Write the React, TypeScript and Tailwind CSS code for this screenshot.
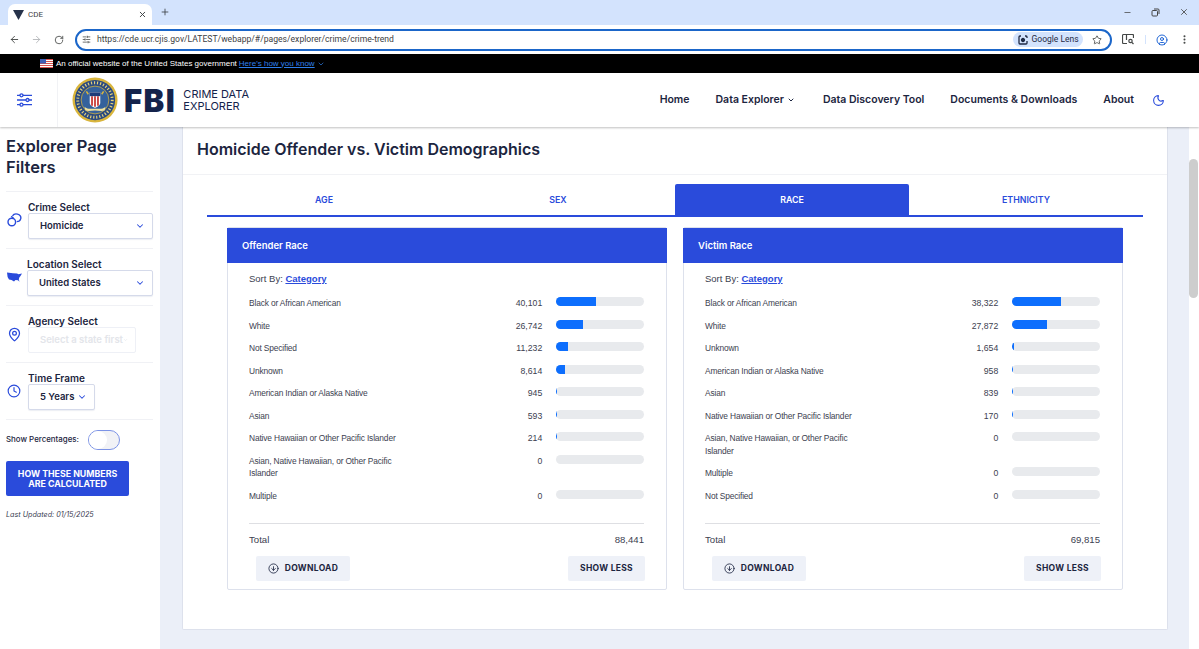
import {
  ArrowDownCircle,
  ArrowLeft,
  ArrowRight,
  ChevronDown,
  CircleUser,
  Clock,
  EllipsisVertical,
  MapPin,
  Minus,
  Moon,
  Plus,
  RotateCw,
  SlidersHorizontal,
  Star,
  X,
} from "lucide-react";

interface Row {
  label: string;
  value: string;
  pct: number;
}

const offender: Row[] = [
  { label: "Black or African American", value: "40,101", pct: 45 },
  { label: "White", value: "26,742", pct: 30.5 },
  { label: "Not Specified", value: "11,232", pct: 13 },
  { label: "Unknown", value: "8,614", pct: 10 },
  { label: "American Indian or Alaska Native", value: "945", pct: 1.1 },
  { label: "Asian", value: "593", pct: 0.7 },
  { label: "Native Hawaiian or Other Pacific Islander", value: "214", pct: 0.4 },
  { label: "Asian, Native Hawaiian, or Other Pacific Islander", value: "0", pct: 0 },
  { label: "Multiple", value: "0", pct: 0 },
];

const victim: Row[] = [
  { label: "Black or African American", value: "38,322", pct: 55 },
  { label: "White", value: "27,872", pct: 40 },
  { label: "Unknown", value: "1,654", pct: 2.4 },
  { label: "American Indian or Alaska Native", value: "958", pct: 1.4 },
  { label: "Asian", value: "839", pct: 1.2 },
  { label: "Native Hawaiian or Other Pacific Islander", value: "170", pct: 0.3 },
  { label: "Asian, Native Hawaiian, or Other Pacific Islander", value: "0", pct: 0 },
  { label: "Multiple", value: "0", pct: 0 },
  { label: "Not Specified", value: "0", pct: 0 },
];

function Seal() {
  return (
    <svg width="46" height="46" viewBox="0 0 48 48">
      <circle cx="24" cy="24" r="23.5" fill="#d9b53c" />
      <circle cx="24" cy="24" r="21" fill="#2a4a80" />
      <circle cx="24" cy="24" r="18" fill="none" stroke="#e6d27a" strokeWidth="3" strokeDasharray="1.2 2" />
      <circle cx="24" cy="24" r="14.5" fill="#34619c" stroke="#d9b53c" strokeWidth="0.8" />
      <path d="M18.5 16h11v11c0 2.5-3 4-5.5 5-2.5-1-5.5-2.500-5.5-5z" fill="#fff" />
      <path d="M20 20h1.800v10h-1.800zM23.100 20h1.800v11h-1.800zM26.200 20h1.800v10h-1.800z" fill="#c8342f" />
      <path d="M18.500 16h11v4h-11z" fill="#1f3c78" />
      <path d="M13 31c3 3 7 2 11 2s8 1 11-2l-1 4c-3 1-7 0-10 0s-7 1-10 0z" fill="#f1e3a0" />
      <path d="M15 15l2 3M33 15l-2 3" stroke="#d9b53c" strokeWidth="1.6" />
    </svg>
  );
}

function Handcuffs() {
  return (
    <svg width="15" height="14" viewBox="0 0 15 14" fill="none" stroke="#2a4bdb" strokeWidth="1.4">
      <circle cx="4.800" cy="9" r="3.800" />
      <path d="M5.500 2.800c1-1.500 3-2.200 5-1.700 2.500.6 3.800 2.800 3.200 4.800-.5 1.700-2 2.700-3.900 2.700" />
      <path d="M4.200 3.200l2.300 2" />
    </svg>
  );
}

function UsMap() {
  return (
    <svg width="15" height="10" viewBox="0 0 15 10" fill="#2a4bdb">
      <path d="M0 .5L6 1.200L10 1.600L11.500 2.200L15 1.500L13.500 4L12.300 5.500L11.800 7.500L12.500 9.800L11 8.300L8.500 8L7 9.500L4.500 8L2 7.500L.6 5z" />
    </svg>
  );
}

function FilterToggleIcon() {
  return (
    <svg width="15" height="14" viewBox="0 0 15 14" fill="none" stroke="#2a4bdb" strokeWidth="1.300">
      <path d="M0 2.300h3M6 2.300h9M0 7h9M12 7h3M0 11.700h3M6 11.700h9" />
      <circle cx="4.500" cy="2.300" r="1.500" />
      <circle cx="10.500" cy="7" r="1.500" />
      <circle cx="4.500" cy="11.700" r="1.500" />
    </svg>
  );
}

function Select({
  value,
  width,
  disabled,
}: {
  value: string;
  width: string;
  disabled?: boolean;
}) {
  return (
    <div
      className={
        "flex h-[26px] items-center justify-between rounded-[2px] border bg-white pr-[7px] pl-[11px] text-[9.500px] font-semibold " +
        width +
        (disabled ? " border-[#eef0f6] font-normal text-[#e3e5ea]" : " border-[#d5daea] text-[#1c2540] shadow-[0_1px_1px_rgba(30,50,120,0.08)]")
      }
    >
      <span className="whitespace-nowrap">{value}</span>
      <ChevronDown size={10} strokeWidth={2.5} className={disabled ? "text-[#e3e5ea]" : "text-[#2a4bdb]"} />
    </div>
  );
}

function Filter({
  icon,
  label,
  iconWidth = "w-[22px]",
  children,
}: {
  icon: React.ReactNode;
  label: string;
  iconWidth?: string;
  children: React.ReactNode;
}) {
  return (
    <div className="flex h-[57px] items-center border-t border-[#f0f1f5]">
      <div className={"flex shrink-0 justify-start pl-px " + iconWidth}>{icon}</div>
      <div>
        <div className="text-[10px] leading-[12px] font-semibold text-[#1c2540]">{label}</div>
        {children}
      </div>
    </div>
  );
}

function Sidebar() {
  return (
    <aside className="h-full w-[160px] shrink-0 bg-white pt-[9px] pl-[6px]">
      <h2 className="text-[16.500px] leading-[21px] font-semibold text-[#1c2540]">
        Explorer Page
        <br />
        Filters
      </h2>
      <div className="mt-[13px] w-[147px]">
        <Filter icon={<Handcuffs />} label="Crime Select">
          <Select value="Homicide" width="w-[125px]" />
        </Filter>
        <Filter icon={<UsMap />} iconWidth="w-[21px]" label="Location Select">
          <Select value="United States" width="w-[126px]" />
        </Filter>
        <Filter icon={<MapPin size={15} strokeWidth={2} className="text-[#2a4bdb]" />} label="Agency Select">
          <Select value="Select a state first" width="w-[108px]" disabled />
        </Filter>
        <Filter icon={<Clock size={14} strokeWidth={2} className="text-[#2a4bdb]" />} label="Time Frame">
          <Select value="5 Years" width="w-[67px]" />
        </Filter>
        <div className="flex h-[41px] items-center gap-[9px] border-t border-[#f0f1f5]">
          <span className="text-[7.900px] font-medium text-[#1c2540]">Show Percentages:</span>
          <div className="flex h-[20px] w-[32px] rounded-full border border-[#7c93e6] bg-[#f1f2f6]">
            <div className="h-full w-[18px] rounded-full bg-white" />
          </div>
        </div>
      </div>
      <button
        type="button"
        className="mt-[1px] h-[35px] w-[123px] rounded-[2px] bg-[#2a4bdb] text-[8.800px] leading-[10px] font-bold text-white"
      >
        HOW THESE NUMBERS
        <br />
        ARE CALCULATED
      </button>
      <p className="mt-[14px] text-[7.200px] text-[#3a4052] italic">Last Updated: 01/15/2025</p>
    </aside>
  );
}

function Panel({ title, rows, total }: { title: string; rows: Row[]; total: string }) {
  return (
    <section className="h-[363px] w-[440px] rounded-[2px] border border-[#dde1ec] bg-white font-['Liberation_Sans',sans-serif]">
      <div className="-mx-px flex h-[35px] items-center bg-[#2a4bdb] pt-[1px] pl-[15px] font-['Inter',sans-serif] text-[9.500px] font-semibold text-white">
        {title}
      </div>
      <div className="pt-[9px] pr-[22px] pl-[21px]">
        <div className="h-[14px] text-[9.500px] leading-[14px] text-[#3c4150]">
          Sort By:{" "}
          <a href="#" className="font-bold text-[#2a4bdb] underline">
            Category
          </a>
        </div>
        <div className="mt-[11px] flex flex-col gap-[10px]">
          {rows.map((r) => (
            <div key={r.label} className="flex items-start text-[8.400px] leading-[12.500px] text-[#3c4150]">
              <div className="w-[161px] tracking-[-0.15px]">{r.label}</div>
              <div className="w-[133px] text-right text-[8.700px]">{r.value}</div>
              <div className="ml-[14px] h-[9px] w-[88px] overflow-hidden rounded-full bg-[#e8eaed]">
                <div className="h-full bg-[#0d6efd]" style={{ width: `${r.pct}%` }} />
              </div>
            </div>
          ))}
        </div>
        <div className="mt-[21px] border-t border-[#dedfe3] pt-[10px]">
          <div className="flex justify-between text-[9.600px] leading-[12px] text-[#3c4150]">
            <span>Total</span>
            <span>{total}</span>
          </div>
          <div className="-mr-px mt-[10px] flex justify-between pl-[7px] font-['Inter',sans-serif] text-[8.500px] font-bold tracking-[0.3px] text-[#1c2540]">
            <button type="button" className="flex h-[25px] w-[94px] items-center justify-center gap-[6px] rounded-[2px] bg-[#eef1f8]">
              <ArrowDownCircle size={11} strokeWidth={1.800} />
              DOWNLOAD
            </button>
            <button type="button" className="h-[25px] w-[77px] rounded-[2px] bg-[#eef1f8]">
              SHOW LESS
            </button>
          </div>
        </div>
      </div>
    </section>
  );
}

function Tabs() {
  const tabs = ["AGE", "SEX", "RACE", "ETHNICITY"];
  return (
    <div className="mx-[24px] mt-[9px] flex h-[33px] border-b-2 border-[#2a4bdb]">
      {tabs.map((t) => (
        <div
          key={t}
          className={
            "flex flex-1 items-center justify-center rounded-t-[2px] text-[8.800px] font-semibold " +
            (t === "RACE" ? "bg-[#2a4bdb] text-white" : "text-[#2a4bdb]")
          }
        >
          {t}
        </div>
      ))}
    </div>
  );
}

function BrowserBar() {
  return (
    <div className="font-['Roboto',sans-serif]">
      <div className="flex h-[25px] items-end bg-[#d3e3fd] pl-[8px]">
        <div className="flex h-[21px] w-[144px] items-center rounded-t-[7px] bg-white pr-[5px] pl-[5px]">
          <svg width="11" height="10" viewBox="0 0 11 10" fill="#26324a">
            <path d="M0 0h11L5.500 10z" />
          </svg>
          <span className="ml-[4px] flex-1 text-[8px] text-[#3c4043]">CDE</span>
          <X size={9} strokeWidth={2.500} className="text-[#3c4043]" />
        </div>
        <Plus size={10} strokeWidth={2} className="mb-[8px] ml-[8px] text-[#3c4043]" />
        <div className="mb-[8px] ml-auto flex items-center gap-[19px] pr-[10px] text-[#444]">
          <Minus size={9} />
          <svg width="9" height="9" viewBox="0 0 9 9" fill="none" stroke="#444" strokeWidth="1">
            <rect x="1" y="2.500" width="5.500" height="5.500" rx="1" />
            <path d="M3 1h4a1 1 0 0 1 1 1v4" />
          </svg>
          <X size={10} />
        </div>
      </div>
      <div className="flex h-[29px] items-center bg-white pr-[9px] pl-[9px] text-[#444746]">
        <ArrowLeft size={11} strokeWidth={2} />
        <ArrowRight size={11} strokeWidth={2} className="ml-[11px] text-[#b5b7ba]" />
        <RotateCw size={10} strokeWidth={2} className="ml-[12px]" />
        <div className="ml-[11px] flex h-[22px] w-[1039px] items-center rounded-full border-2 border-[#1b66c9] pr-[8px] pl-[5px]">
          <SlidersHorizontal size={9} strokeWidth={2} />
          <span className="ml-[6px] flex-1 text-[8.600px] text-[#3c4043]">
            https://cde.ucr.cjis.gov/LATEST/webapp/#/pages/explorer/crime/crime-trend
          </span>
          <div className="flex h-[15px] w-[70px] items-center justify-center gap-[4px] rounded-full bg-[#d3e3fd] text-[8.500px] text-[#1f2a44]">
            <svg width="10" height="10" viewBox="0 0 10 10" fill="none" stroke="#1f2a44" strokeWidth="1.300">
              <path d="M3 1H2a1 1 0 0 0-1 1v6a1 1 0 0 0 1 1h6a1 1 0 0 0 1-1V6M7 1h1a1 1 0 0 1 1 1v1" />
              <circle cx="5" cy="5" r="1.500" fill="#1f2a44" />
            </svg>
            Google Lens
          </div>
          <Star size={10} strokeWidth={2} className="ml-[9px]" />
        </div>
        <svg width="12" height="11" viewBox="0 0 12 11" fill="none" stroke="#444746" strokeWidth="1.200" className="ml-[10px]">
          <path d="M5 9.500H1.500a1 1 0 0 1-1-1v-7a1 1 0 0 1 1-1h9a1 1 0 0 1 1 1V4M4.500.5V6" />
          <circle cx="8.500" cy="7" r="1.700" />
          <path d="M10 8.500l1.500 1.500" />
        </svg>
        <div className="ml-[11px] h-[9px] w-px bg-[#d3e3fd]" />
        <CircleUser size={12} strokeWidth={1.800} className="ml-[10px] text-[#0b57d0]" />
        <EllipsisVertical size={11} strokeWidth={2.500} className="ml-[11px]" />
      </div>
    </div>
  );
}

function GovBanner() {
  return (
    <div className="flex h-[19px] items-center bg-black pl-[40px] font-['Liberation_Sans',sans-serif] text-[8px] text-white">
      <svg width="13" height="9" viewBox="0 0 13 9" className="mr-[3px]">
        <rect width="13" height="9" fill="#fff" />
        <path d="M0 .5h13M0 2.500h13M0 4.500h13M0 6.500h13M0 8.500h13" stroke="#d9534f" strokeWidth="1" />
        <rect width="6" height="4.500" fill="#3f5fb5" />
      </svg>
      An official website of the United States government
      <a href="#" className="ml-[2px] text-[#2f80ed] underline">
        Here's how you know
      </a>
      <ChevronDown size={8} className="ml-[2px] text-[#2f80ed]" />
    </div>
  );
}

function SiteHeader() {
  return (
    <header className="relative z-10 flex h-[54px] items-center bg-white font-['Inter',sans-serif] shadow-[0_1px_2px_rgba(0,0,0,0.25)]">
      <div className="flex h-full w-[58px] items-center border-r border-[#f1f2f5] py-[2px] pl-[17px]">
        <FilterToggleIcon />
      </div>
      <div className="ml-[14px] flex">
        <Seal />
      </div>
      <div className="ml-[6px] text-[31px] leading-none font-black tracking-[1.5px] text-[#14234b]">FBI</div>
      <div className="ml-[7px] text-[11px] leading-[12.500px] text-[#14234b]">
        CRIME DATA
        <br />
        EXPLORER
      </div>
      <nav className="ml-auto flex items-center pr-[34px] text-[10.500px] font-semibold text-[#1c2540]">
        <span>Home</span>
        <span className="ml-[26px] flex items-center gap-[3px]">
          Data Explorer <ChevronDown size={8} strokeWidth={3} />
        </span>
        <span className="ml-[28px]">Data Discovery Tool</span>
        <span className="ml-[26px]">Documents &amp; Downloads</span>
        <span className="ml-[26px]">About</span>
        <Moon size={13} strokeWidth={2} className="ml-[18px] text-[#2a4bdb]" />
      </nav>
    </header>
  );
}

export default function App() {
  return (
    <div className="flex h-[649px] w-[1199px] flex-col overflow-hidden bg-white font-['Inter',sans-serif]">
      <BrowserBar />
      <GovBanner />
      <SiteHeader />
      <div className="flex min-h-0 flex-1">
        <Sidebar />
        <main className="min-w-0 flex-1 bg-[#ebeff8]">
          <div className="ml-[22px] h-[503px] w-[986px] rounded-b-[2px] border border-t-0 border-[#dde1ec] bg-white">
            <div className="flex h-[48px] items-center border-b border-[#f1f2f5] pb-[4px] pl-[14px] text-[16px] font-semibold text-[#1c2540]">
              Homicide Offender vs. Victim Demographics
            </div>
            <Tabs />
            <div className="mx-[44px] mt-[10px] flex gap-[16px]">
              <Panel title="Offender Race" rows={offender} total="88,441" />
              <Panel title="Victim Race" rows={victim} total="69,815" />
            </div>
          </div>
        </main>
        <div className="w-[10px] shrink-0 bg-white pt-[32px]">
          <div className="h-[139px] w-[9px] rounded-full bg-[#cdcdcd]" />
        </div>
      </div>
    </div>
  );
}
